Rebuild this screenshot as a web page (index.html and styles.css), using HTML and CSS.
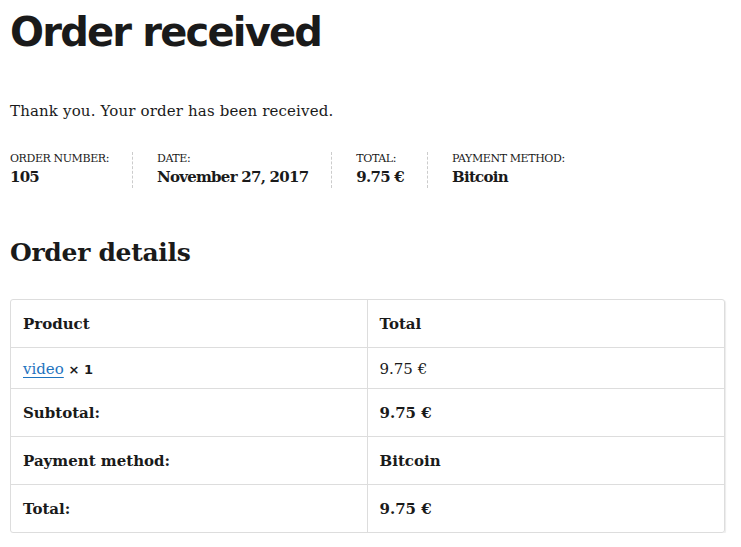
FILE: index.html
```html
<!DOCTYPE html>
<html>
<head>
<meta charset="utf-8">
<link rel="stylesheet" href="styles.css">
</head>
<body>
<main class="page">
  <h1 class="title">Order received</h1>
  <p class="thanks">Thank you. Your order has been received.</p>
  <ul class="overview">
    <li class="ov-item">
      <span class="ov-label">Order number:</span>
      <strong class="ov-value">105</strong>
    </li>
    <li class="ov-item">
      <span class="ov-label">Date:</span>
      <strong class="ov-value">November 27, 2017</strong>
    </li>
    <li class="ov-item">
      <span class="ov-label">Total:</span>
      <strong class="ov-value">9.75 €</strong>
    </li>
    <li class="ov-item ov-last">
      <span class="ov-label">Payment method:</span>
      <strong class="ov-value">Bitcoin</strong>
    </li>
  </ul>
  <h2 class="details-title">Order details</h2>
  <table class="details">
    <thead>
      <tr><th class="cell">Product</th><th class="cell">Total</th></tr>
    </thead>
    <tbody>
      <tr class="row-item"><td class="cell"><a class="prod-link" href="#">video</a> <strong class="qty">× 1</strong></td><td class="cell">9.75 €</td></tr>
    </tbody>
    <tfoot>
      <tr><th class="cell">Subtotal:</th><td class="cell strong">9.75 €</td></tr>
      <tr><th class="cell">Payment method:</th><td class="cell strong">Bitcoin</td></tr>
      <tr><th class="cell">Total:</th><td class="cell strong">9.75 €</td></tr>
    </tfoot>
  </table>
</main>
</body>
</html>
```

FILE: styles.css
```css
html, body {
  margin: 0;
  padding: 0;
  background: #fff;
}
body {
  font-family: "DejaVu Serif", serif;
  color: #1a1a1a;
}
.page {
  padding: 0 16px 0 10px;
}
.title {
  font-family: "DejaVu Sans", sans-serif;
  font-weight: bold;
  font-size: 40px;
  letter-spacing: -1.8px;
  line-height: 1;
  margin: 12px 0 0 0;
  color: #1a1a1a;
}
.thanks {
  font-size: 15px;
  letter-spacing: 0.15px;
  margin: 47px 0 0 0;
  line-height: 24px;
}
.overview {
  list-style: none;
  margin: 29px 0 0 0;
  padding: 0;
  display: flex;
}
.ov-item {
  display: flex;
  flex-direction: column;
  padding-right: 23px;
  margin-right: 24px;
  border-right: 1px dashed #ccc;
}
.ov-last {
  border-right: 0;
}
.ov-label {
  text-transform: uppercase;
  font-size: 11px;
  line-height: 14px;
  letter-spacing: -0.4px;
}
.ov-value {
  font-size: 15px;
  letter-spacing: -0.75px;
  line-height: 22px;
}
.details-title {
  font-size: 25px;
  font-weight: bold;
  letter-spacing: -0.3px;
  margin: 47px 0 0 0;
  line-height: 36px;
}
.details {
  margin-top: 28px;
  width: 715px;
  border-collapse: separate;
  border-spacing: 0;
  border: 1px solid #ddd;
  border-radius: 3px;
  box-shadow: 1px 1px 1px rgba(0,0,0,0.08);
  table-layout: fixed;
}
.cell {
  text-align: left;
  padding: 13px 12px 11px;
  font-size: 15px;
  line-height: 23px;
  border-bottom: 1px solid #ddd;
  border-right: 1px solid #ddd;
  font-weight: normal;
}
.cell:last-child {
  border-right: 0;
}
thead .cell, tfoot th.cell, .strong {
  font-weight: bold;
}
tfoot tr:last-child .cell {
  border-bottom: 0;
}
.row-item .cell {
  padding: 10px 12px 7px;
}
.prod-link {
  color: #1e73be;
  text-decoration: underline;
  text-underline-offset: 3px;
}
.qty {
  font-family: "DejaVu Sans", sans-serif;
  font-size: 13px;
}
```
